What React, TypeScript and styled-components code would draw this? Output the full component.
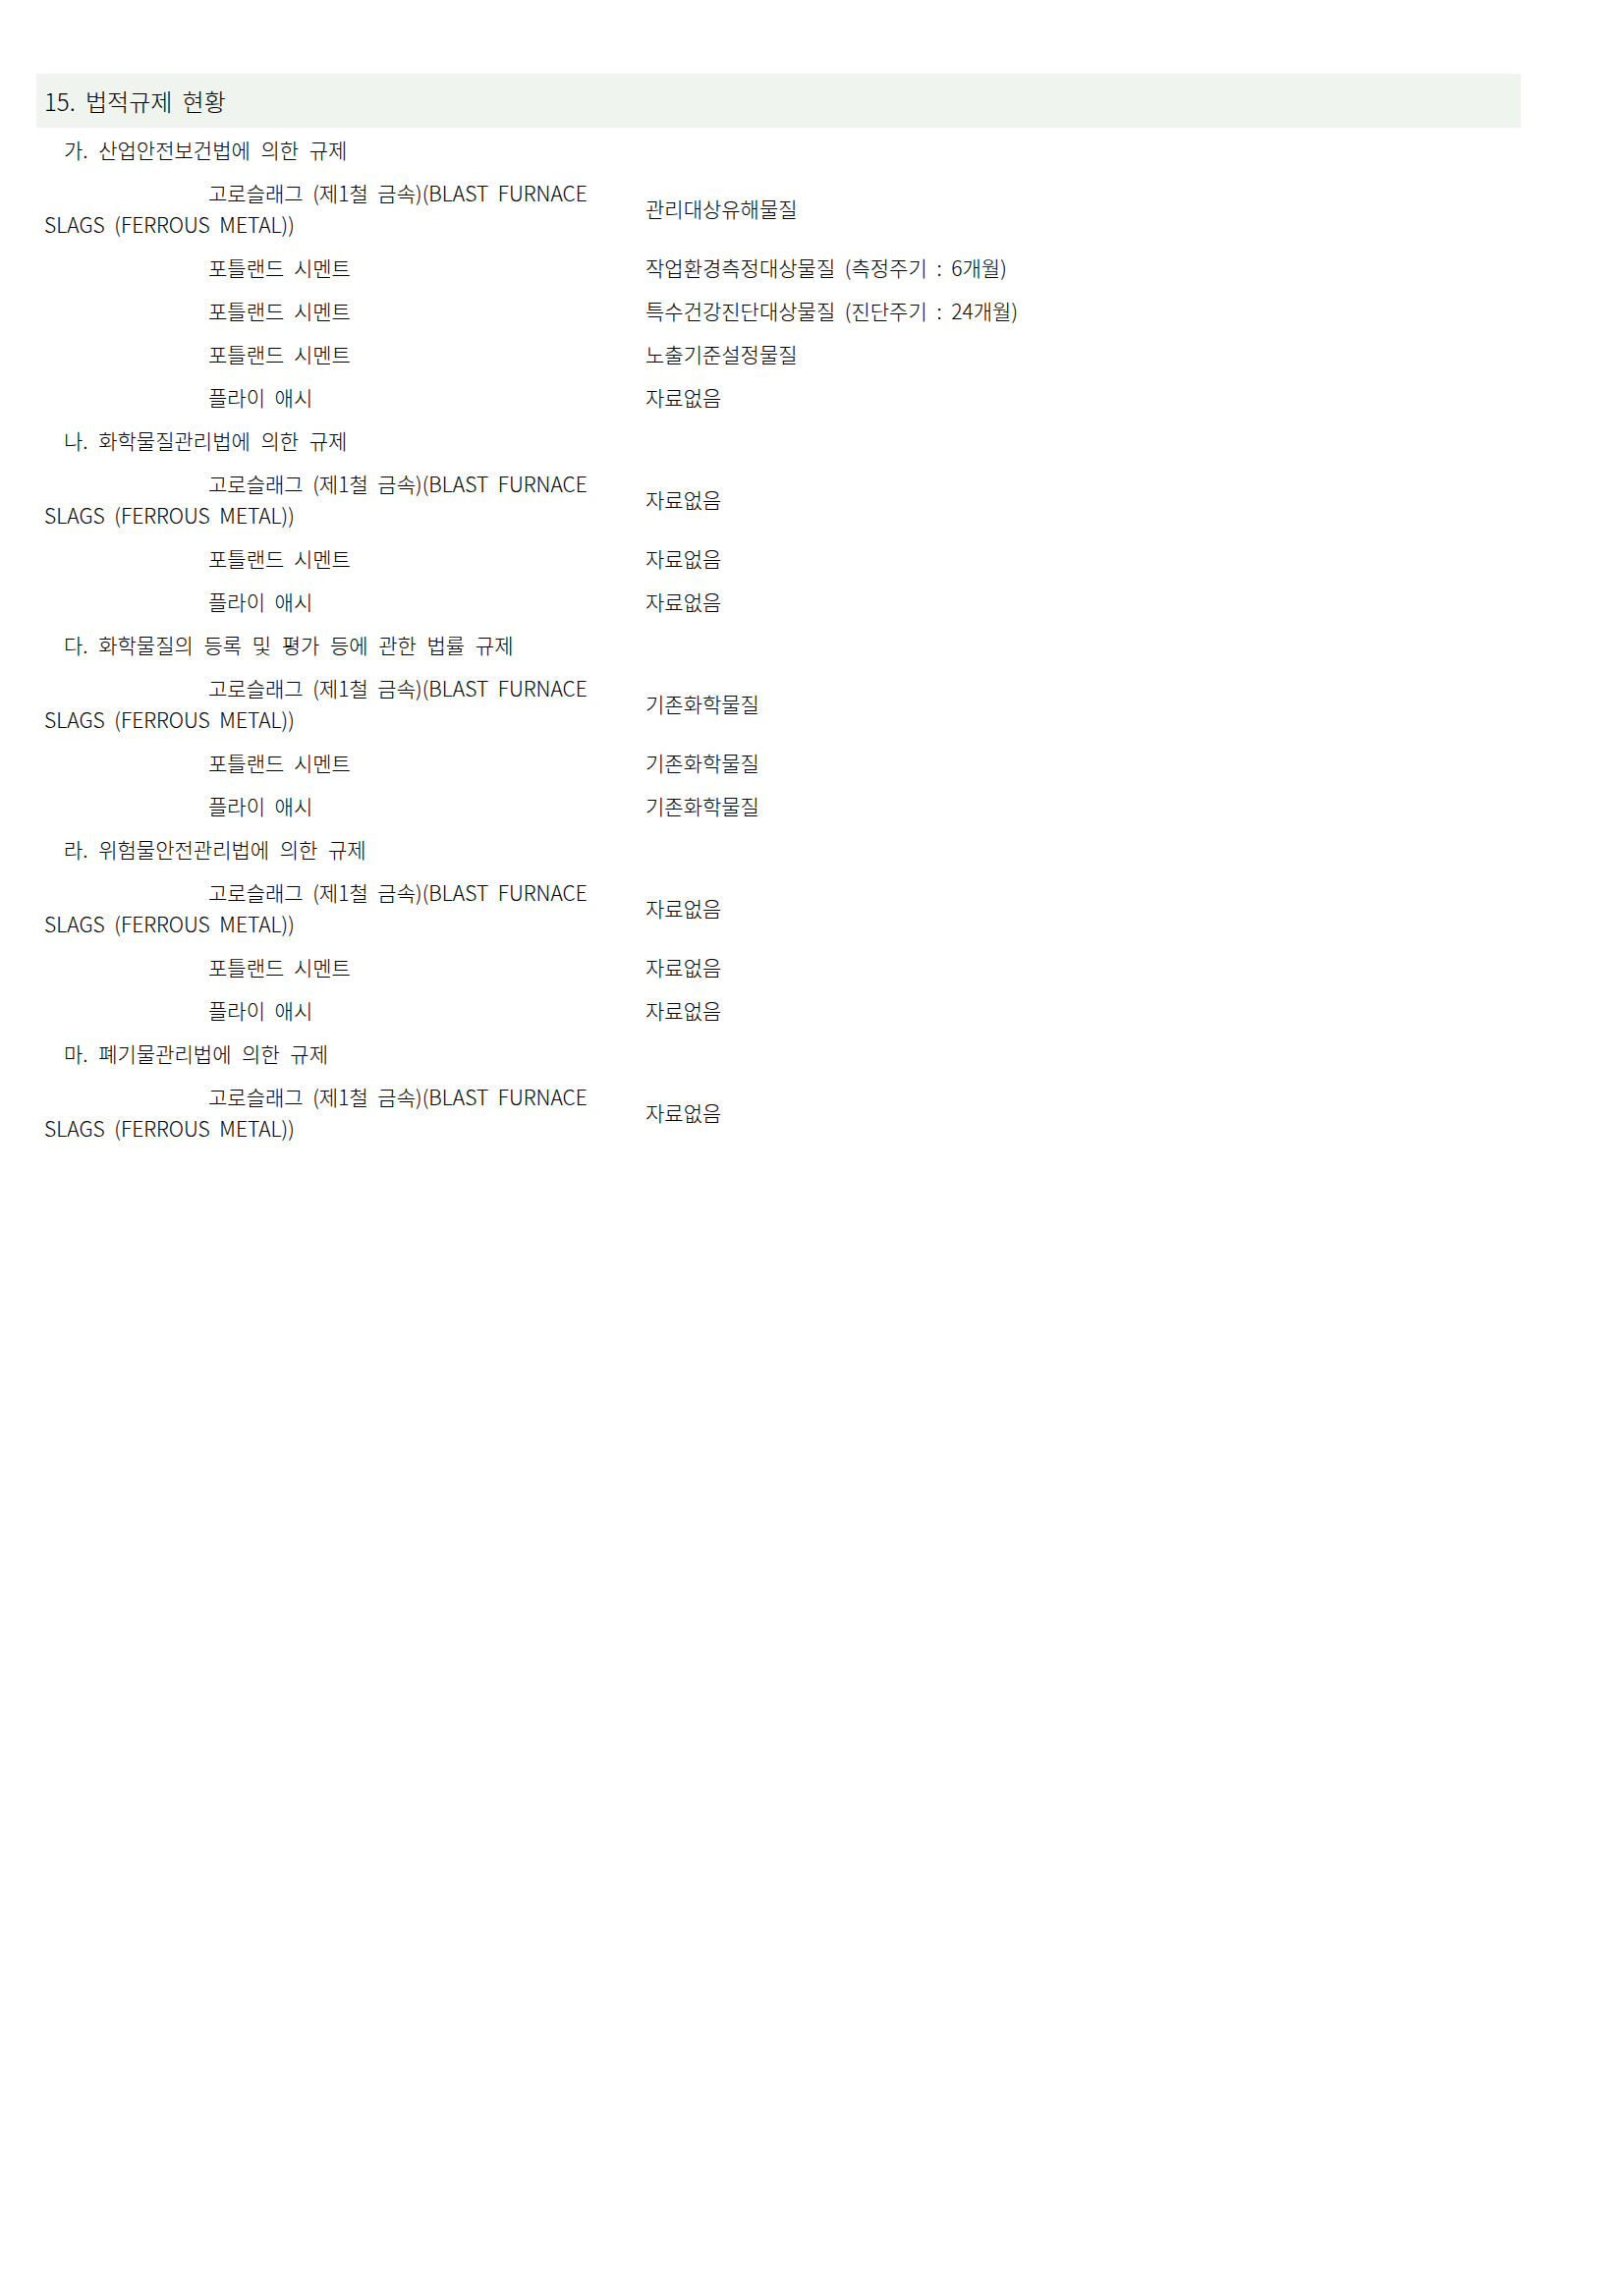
import styled, { createGlobalStyle } from 'styled-components';

const GlobalStyle = createGlobalStyle`
  html, body {
    margin: 0;
    padding: 0;
    background: #fff;
  }
  body {
    font-family: 'Noto Sans CJK KR', 'Noto Sans', sans-serif;
    font-weight: 300;
    color: #000;
  }
`;

type Item = { name: string; value: string };
type Group = { title: string; items: Item[] };

const SLAG = '고로슬래그 (제1철 금속)(BLAST FURNACE SLAGS (FERROUS METAL))';
const CEMENT = '포틀랜드 시멘트';
const ASH = '플라이 애시';
const NONE = '자료없음';

const groups: Group[] = [
  {
    title: '가. 산업안전보건법에 의한 규제',
    items: [
      { name: SLAG, value: '관리대상유해물질' },
      { name: CEMENT, value: '작업환경측정대상물질 (측정주기 : 6개월)' },
      { name: CEMENT, value: '특수건강진단대상물질 (진단주기 : 24개월)' },
      { name: CEMENT, value: '노출기준설정물질' },
      { name: ASH, value: NONE },
    ],
  },
  {
    title: '나. 화학물질관리법에 의한 규제',
    items: [
      { name: SLAG, value: NONE },
      { name: CEMENT, value: NONE },
      { name: ASH, value: NONE },
    ],
  },
  {
    title: '다. 화학물질의 등록 및 평가 등에 관한 법률 규제',
    items: [
      { name: SLAG, value: '기존화학물질' },
      { name: CEMENT, value: '기존화학물질' },
      { name: ASH, value: '기존화학물질' },
    ],
  },
  {
    title: '라. 위험물안전관리법에 의한 규제',
    items: [
      { name: SLAG, value: NONE },
      { name: CEMENT, value: NONE },
      { name: ASH, value: NONE },
    ],
  },
  {
    title: '마. 폐기물관리법에 의한 규제',
    items: [{ name: SLAG, value: NONE }],
  },
];

const App = () => {
  return (
    <>
      <GlobalStyle />
      <Page>
        <SectionTitle>15. 법적규제 현황</SectionTitle>
        <List>
          {groups.map((group) => (
            <div key={group.title}>
              <GroupTitle>{group.title}</GroupTitle>
              {group.items.map((item, i) => (
                <ItemRow key={i}>
                  <ItemName>{item.name}</ItemName>
                  <ItemValue>{item.value}</ItemValue>
                </ItemRow>
              ))}
            </div>
          ))}
        </List>
      </Page>
    </>
  );
};

const Page = styled.div`
  width: 1511px;
  padding: 75px 0 0 37px;
`;

const SectionTitle = styled.h2`
  margin: 0;
  height: 55px;
  line-height: 55px;
  padding-left: 8px;
  background-color: #eff4ee;
  font-size: 24px;
  font-weight: 300;
  word-spacing: 5px;
  color: #000;
`;

const List = styled.div`
  padding-left: 8px;
`;

const GroupTitle = styled.div`
  padding: 6px 0 6px 20px;
  line-height: 32px;
  font-size: 21px;
  word-spacing: 6px;
`;

const ItemRow = styled.div`
  display: grid;
  grid-template-columns: 612px 1fr;
  align-items: center;
  padding: 6px 0;
  font-size: 21px;
  line-height: 32px;
  word-spacing: 5px;
`;

const ItemName = styled.div`
  text-indent: 167px;
`;

const ItemValue = styled.div``;

export default App;
